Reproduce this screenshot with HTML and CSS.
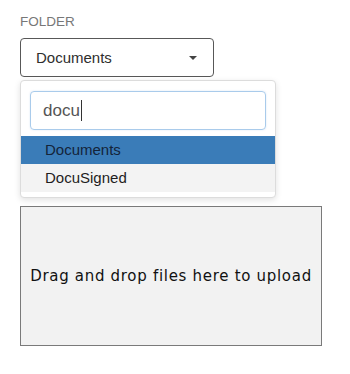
FILE: index.html
```html
<!DOCTYPE html>
<html>
<head>
<meta charset="utf-8">
<link rel="stylesheet" href="styles.css">
</head>
<body>
<div class="page">
  <div class="field">
    <div class="label">FOLDER</div>
    <div class="select">
      <span class="select-value">Documents</span>
      <span class="caret"></span>
    </div>
    <div class="menu">
      <div class="search"><span class="search-text">docu</span><span class="cursor"></span></div>
      <ul class="results">
        <li class="option active">Documents</li>
        <li class="option">DocuSigned</li>
      </ul>
    </div>
  </div>
  <div class="dropzone">Drag and drop files here to upload</div>
</div>
</body>
</html>
```

FILE: styles.css
```css
html, body {
  margin: 0;
  padding: 0;
  background: #ffffff;
}

.page {
  padding: 14px 0 0 20px;
  font-family: "Liberation Sans", Arial, sans-serif;
}

.field {
  position: relative;
}

.label {
  font-size: 13.5px;
  line-height: 16px;
  color: #777777;
  height: 16px;
}

.select {
  margin-top: 8px;
  box-sizing: border-box;
  width: 194px;
  height: 39px;
  border: 1px solid #585858;
  border-radius: 4px;
  display: flex;
  align-items: center;
  justify-content: space-between;
  padding: 0 16px 0 15px;
  font-size: 15px;
  color: #2e2e2e;
}

.caret {
  width: 0;
  height: 0;
  border-left: 4px solid transparent;
  border-right: 4px solid transparent;
  border-top: 4px solid #444444;
  margin-top: 1px;
}

.menu {
  position: absolute;
  left: 0;
  top: 66px;
  box-sizing: border-box;
  width: 256px;
  height: 118px;
  background: #ffffff;
  border: 1px solid #dcdcdc;
  border-radius: 4px;
  box-shadow: 0 2px 6px rgba(0, 0, 0, 0.12);
  padding-top: 10px;
}

.search {
  margin: 0 9px;
  box-sizing: border-box;
  height: 39px;
  border: 1px solid #a9cbeb;
  border-radius: 4px;
  box-shadow: 0 0 2px rgba(102, 160, 220, 0.25);
  display: flex;
  align-items: center;
  padding-left: 12px;
  font-size: 17px;
  color: #555555;
}

.cursor {
  display: inline-block;
  width: 1px;
  height: 21px;
  background: #333333;
  margin-left: 1px;
}

.results {
  list-style: none;
  margin: 6px 0 0 0;
  padding: 0;
}

.option {
  height: 28px;
  line-height: 28px;
  padding-left: 24px;
  font-size: 15px;
  color: #1e1e1e;
  background: #f3f3f3;
}

.option.active {
  background: #3a7cb8;
  color: #14243a;
}

.dropzone {
  margin-top: 129px;
  box-sizing: border-box;
  width: 302px;
  height: 140px;
  border: 1px solid #7a7a7a;
  background: #f2f2f2;
  display: flex;
  align-items: center;
  justify-content: center;
  font-family: "DejaVu Sans", Verdana, sans-serif;
  font-size: 15px;
  letter-spacing: 0.7px;
  color: #111111;
}
```
